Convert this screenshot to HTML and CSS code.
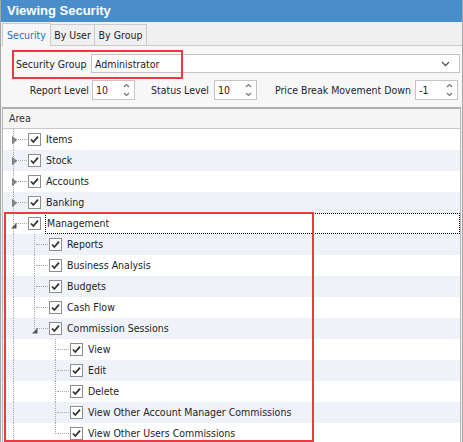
FILE: index.html
```html
<!DOCTYPE html>
<html>
<head>
<title>Viewing Security</title>
<meta charset="UTF-8">
<link rel="stylesheet" href="styles.css">
</head>
<body>
<div class="window">
  <div class="title">Viewing Security</div>
  <div class="tabs">
    <div class="tab tab-security active">Security</div>
    <div class="tab tab-user">By User</div>
    <div class="tab tab-group">By Group</div>
  </div>
  <div class="panel">
    <div class="field-row">
      <span class="lbl lbl-group">Security Group</span>
      <div class="combo">
        <span>Administrator</span>
        <svg width="9" height="6" viewBox="0 0 9 6"><path d="M1 1 L4.5 4.5 L8 1" fill="none" stroke="#555" stroke-width="1.3"/></svg>
      </div>
    </div>
    <div class="field-row levels">
      <span class="lbl lbl-report">Report Level</span>
      <div class="spin"><span>10</span><svg width="7" height="14" viewBox="0 0 7 14"><path d="M1 4 L3.5 1.5 L6 4 M1 10 L3.5 12.5 L6 10" fill="none" stroke="#777" stroke-width="1.2"/></svg></div>
      <span class="lbl lbl-status">Status Level</span>
      <div class="spin"><span>10</span><svg width="7" height="14" viewBox="0 0 7 14"><path d="M1 4 L3.5 1.5 L6 4 M1 10 L3.5 12.5 L6 10" fill="none" stroke="#777" stroke-width="1.2"/></svg></div>
      <span class="lbl lbl-price">Price Break Movement Down</span>
      <div class="spin"><span>-1</span><svg width="7" height="14" viewBox="0 0 7 14"><path d="M1 4 L3.5 1.5 L6 4 M1 10 L3.5 12.5 L6 10" fill="none" stroke="#777" stroke-width="1.2"/></svg></div>
    </div>
    <div class="mark mark-group"></div>
  </div>

  <div class="grid">
    <div class="grid-head">Area</div>

    <div class="row">
      <span class="cell branch"><svg class="exp" width="5" height="8" viewBox="0 0 5 8"><path d="M0.5 0.5 L4.5 4 L0.5 7.5 Z" fill="#8a8a8a" stroke="#6a6a6a" stroke-width="0.8"/></svg></span>
      <span class="check"><svg width="13" height="13" viewBox="0 0 13 13"><path d="M3 6.5 L5.3 9 L10 3.6" fill="none" stroke="#333" stroke-width="1.8"/></svg></span>
      <span class="text">Items</span>
    </div>
    <div class="row alt">
      <span class="cell branch"><svg class="exp" width="5" height="8" viewBox="0 0 5 8"><path d="M0.5 0.5 L4.5 4 L0.5 7.5 Z" fill="#8a8a8a" stroke="#6a6a6a" stroke-width="0.8"/></svg></span>
      <span class="check"><svg width="13" height="13" viewBox="0 0 13 13"><path d="M3 6.5 L5.3 9 L10 3.6" fill="none" stroke="#333" stroke-width="1.8"/></svg></span>
      <span class="text">Stock</span>
    </div>
    <div class="row">
      <span class="cell branch"><svg class="exp" width="5" height="8" viewBox="0 0 5 8"><path d="M0.5 0.5 L4.5 4 L0.5 7.5 Z" fill="#8a8a8a" stroke="#6a6a6a" stroke-width="0.8"/></svg></span>
      <span class="check"><svg width="13" height="13" viewBox="0 0 13 13"><path d="M3 6.5 L5.3 9 L10 3.6" fill="none" stroke="#333" stroke-width="1.8"/></svg></span>
      <span class="text">Accounts</span>
    </div>
    <div class="row alt">
      <span class="cell branch"><svg class="exp" width="5" height="8" viewBox="0 0 5 8"><path d="M0.5 0.5 L4.5 4 L0.5 7.5 Z" fill="#8a8a8a" stroke="#6a6a6a" stroke-width="0.8"/></svg></span>
      <span class="check"><svg width="13" height="13" viewBox="0 0 13 13"><path d="M3 6.5 L5.3 9 L10 3.6" fill="none" stroke="#333" stroke-width="1.8"/></svg></span>
      <span class="text">Banking</span>
    </div>
    <div class="row">
      <span class="cell branch"><svg class="exp open" width="6" height="6" viewBox="0 0 6 6"><path d="M5.5 0 L5.5 5.5 L0 5.5 Z" fill="#555"/></svg></span>
      <span class="check"><svg width="13" height="13" viewBox="0 0 13 13"><path d="M3 6.5 L5.3 9 L10 3.6" fill="none" stroke="#333" stroke-width="1.8"/></svg></span>
      <span class="text focus">Management</span>
    </div>

    <div class="row alt">
      <span class="cell vline"></span><span class="cell branch"></span>
      <span class="check"><svg width="13" height="13" viewBox="0 0 13 13"><path d="M3 6.5 L5.3 9 L10 3.6" fill="none" stroke="#333" stroke-width="1.8"/></svg></span>
      <span class="text">Reports</span>
    </div>
    <div class="row">
      <span class="cell vline"></span><span class="cell branch"></span>
      <span class="check"><svg width="13" height="13" viewBox="0 0 13 13"><path d="M3 6.5 L5.3 9 L10 3.6" fill="none" stroke="#333" stroke-width="1.8"/></svg></span>
      <span class="text">Business Analysis</span>
    </div>
    <div class="row alt">
      <span class="cell vline"></span><span class="cell branch"></span>
      <span class="check"><svg width="13" height="13" viewBox="0 0 13 13"><path d="M3 6.5 L5.3 9 L10 3.6" fill="none" stroke="#333" stroke-width="1.8"/></svg></span>
      <span class="text">Budgets</span>
    </div>
    <div class="row">
      <span class="cell vline"></span><span class="cell branch"></span>
      <span class="check"><svg width="13" height="13" viewBox="0 0 13 13"><path d="M3 6.5 L5.3 9 L10 3.6" fill="none" stroke="#333" stroke-width="1.8"/></svg></span>
      <span class="text">Cash Flow</span>
    </div>
    <div class="row alt">
      <span class="cell vline"></span><span class="cell last"><svg class="exp open" width="6" height="6" viewBox="0 0 6 6"><path d="M5.5 0 L5.5 5.5 L0 5.5 Z" fill="#555"/></svg></span>
      <span class="check"><svg width="13" height="13" viewBox="0 0 13 13"><path d="M3 6.5 L5.3 9 L10 3.6" fill="none" stroke="#333" stroke-width="1.8"/></svg></span>
      <span class="text">Commission Sessions</span>
    </div>

    <div class="row">
      <span class="cell vline"></span><span class="cell"></span><span class="cell branch"></span>
      <span class="check"><svg width="13" height="13" viewBox="0 0 13 13"><path d="M3 6.5 L5.3 9 L10 3.6" fill="none" stroke="#333" stroke-width="1.8"/></svg></span>
      <span class="text">View</span>
    </div>
    <div class="row alt">
      <span class="cell vline"></span><span class="cell"></span><span class="cell branch"></span>
      <span class="check"><svg width="13" height="13" viewBox="0 0 13 13"><path d="M3 6.5 L5.3 9 L10 3.6" fill="none" stroke="#333" stroke-width="1.8"/></svg></span>
      <span class="text">Edit</span>
    </div>
    <div class="row">
      <span class="cell vline"></span><span class="cell"></span><span class="cell branch"></span>
      <span class="check"><svg width="13" height="13" viewBox="0 0 13 13"><path d="M3 6.5 L5.3 9 L10 3.6" fill="none" stroke="#333" stroke-width="1.8"/></svg></span>
      <span class="text">Delete</span>
    </div>
    <div class="row alt">
      <span class="cell vline"></span><span class="cell"></span><span class="cell branch"></span>
      <span class="check"><svg width="13" height="13" viewBox="0 0 13 13"><path d="M3 6.5 L5.3 9 L10 3.6" fill="none" stroke="#333" stroke-width="1.8"/></svg></span>
      <span class="text">View Other Account Manager Commissions</span>
    </div>
    <div class="row">
      <span class="cell vline"></span><span class="cell"></span><span class="cell last"></span>
      <span class="check"><svg width="13" height="13" viewBox="0 0 13 13"><path d="M3 6.5 L5.3 9 L10 3.6" fill="none" stroke="#333" stroke-width="1.8"/></svg></span>
      <span class="text">View Other Users Commissions</span>
    </div>

    <div class="mark mark-mgmt"></div>
  </div>
</div>
</body>
</html>
```

FILE: styles.css
```css
body {
  margin: 0;
  background-color: #f0f0f0;
  font-family: "DejaVu Sans Condensed", "Liberation Sans", sans-serif;
  font-size: 10.5px;
  color: #1e1e1e;
}
.window {
  width: 461px;
  height: 442px;
  overflow: hidden;
  border-left: 1px solid #a6a6a6;
  border-right: 1px solid #a6a6a6;
  background-color: #f0f0f0;
}
.title {
  height: 22px;
  line-height: 22px;
  padding-left: 6px;
  background-color: #4a8dcb;
  color: #fff;
  font-family: "Liberation Sans", sans-serif;
  font-weight: bold;
  font-size: 13px;
}

/* tabs */
.tabs {
  display: flex;
  align-items: flex-end;
  height: 23px;
  padding-left: 1px;
  border-bottom: 1px solid #c9c9c9;
}
.tab {
  height: 20px;
  line-height: 20px;
  text-align: center;
  border: 1px solid #cbcbcb;
  border-bottom: none;
  margin-left: -1px;
  background-color: #f0f0f0;
  color: #222;
}
.tab.active {
  height: 22px;
  line-height: 23px;
  margin-bottom: -1px;
  background-color: #f7f7f7;
  color: #1a73c8;
  position: relative;
  z-index: 1;
}
.tab-security { width: 47px; margin-left: 0; }
.tab-user { width: 43px; }
.tab-group { width: 51px; }

/* top fields */
.panel {
  position: relative;
  height: 53px;
  padding-top: 8px;
  background-color: #f7f7f7;
}
.field-row {
  display: flex;
  align-items: center;
}
.lbl {
  color: #1e1e2a;
  white-space: nowrap;
}
.lbl-group {
  width: 75px;
  padding-left: 15px;
}
.combo {
  display: flex;
  align-items: center;
  justify-content: space-between;
  width: 355px;
  height: 17px;
  padding: 0 9px 0 3px;
  background-color: #fff;
  border: 1px solid #c4c4c4;
}
.levels {
  margin-top: 7px;
}
.lbl-report { width: 88px; text-align: right; margin-right: 3px; }
.lbl-status { width: 74px; text-align: right; margin-right: 5px; }
.lbl-price { width: 154px; text-align: right; margin-right: 4px; }
.spin {
  display: flex;
  align-items: center;
  justify-content: space-between;
  width: 34px;
  height: 18px;
  padding: 0 4px 0 3px;
  background-color: #fff;
  border: 1px solid #c4c4c4;
}

/* grid */
.grid {
  position: relative;
  margin: 0 1px;
  background-color: #fff;
  border: 1px solid #b8b8b8;
  border-top: 2px solid #b0b0b0;
}
.grid-head {
  height: 19px;
  line-height: 19px;
  padding-left: 6px;
  background-color: #f5f5f5;
  border-bottom: 1px solid #c8c8c8;
  color: #333;
}
.row {
  display: flex;
  align-items: center;
  height: 21px;
}
.row.alt {
  background-color: #eff3f9;
}
.cell {
  position: relative;
  flex: none;
  width: 21px;
  height: 21px;
}
.cell.vline::before,
.cell.branch::before,
.cell.last::before {
  content: "";
  position: absolute;
  left: 10px;
  top: 0;
  height: 21px;
  border-left: 1px dotted #a8a8a8;
}
.cell.last::before {
  height: 11px;
}
.cell.branch::after,
.cell.last::after {
  content: "";
  position: absolute;
  left: 12px;
  top: 10px;
  width: 12px;
  border-top: 1px dotted #a8a8a8;
}
.exp {
  position: absolute;
  left: 9px;
  top: 7px;
  z-index: 1;
}
.exp.open {
  left: 8px;
  top: 10px;
}
.check {
  flex: none;
  width: 13px;
  height: 13px;
  margin-left: 4px;
  border: 1px solid #8e8e8e;
  box-sizing: border-box;
  background-color: #fff;
  position: relative;
  z-index: 1;
}
.check svg {
  display: block;
  margin: -1px;
}
.text {
  margin-left: 4px;
  padding-left: 1px;
  line-height: 19px;
  white-space: nowrap;
}
.text.focus {
  flex: 1;
  border: 1px dotted #000;
  padding-left: 1px;
}

/* red annotation frames */
.mark {
  position: absolute;
  border: 2px solid #ec3a42;
}
.mark-group {
  left: 11px;
  top: 4px;
  width: 167px;
  height: 25px;
}
.mark-mgmt {
  left: 1px;
  top: 103px;
  width: 306px;
  height: 226px;
}
```
